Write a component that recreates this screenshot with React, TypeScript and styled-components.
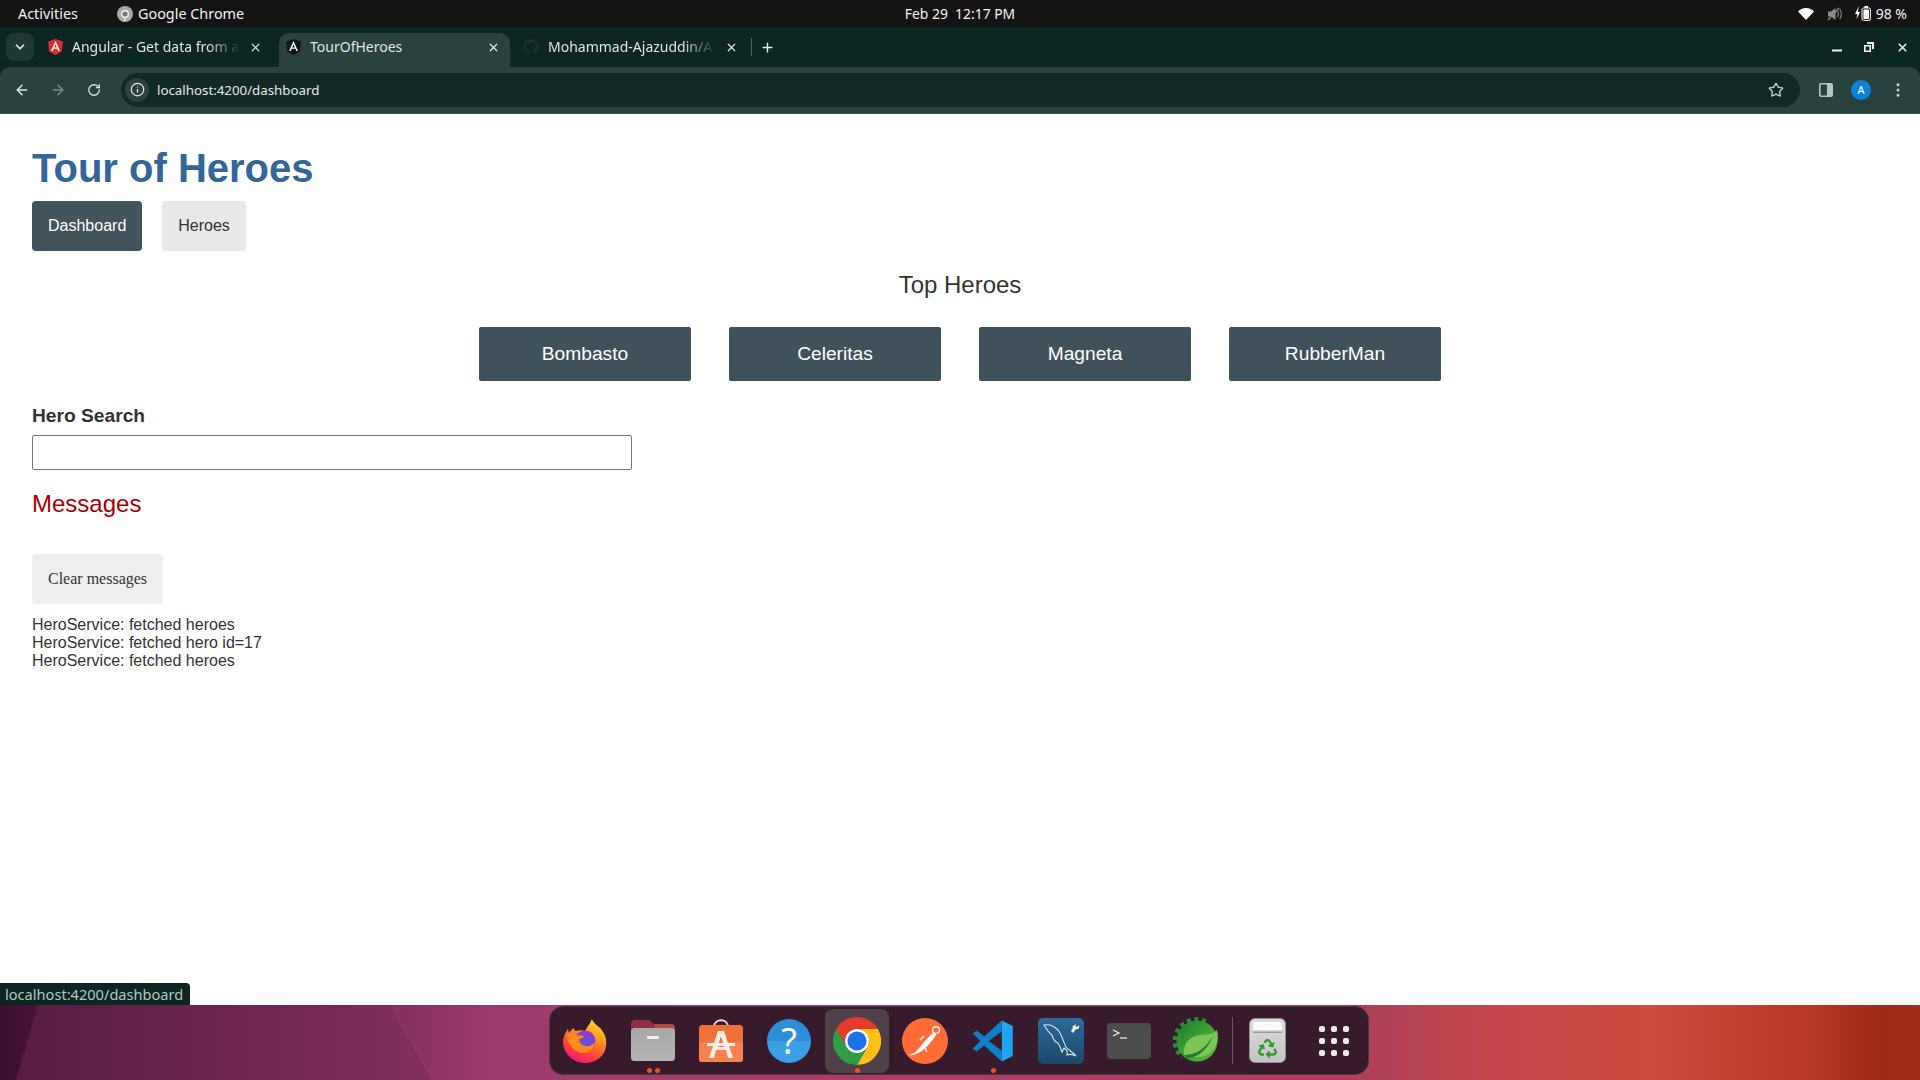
import React from 'react';
import styled, { createGlobalStyle } from 'styled-components';
import { ArrowLeft, ArrowRight, RotateCw, Info, Star, X, Plus, ChevronDown, EllipsisVertical } from 'lucide-react';
import { FaGithub, FaRecycle } from 'react-icons/fa';

const GlobalStyle = createGlobalStyle`
  html, body {
    margin: 0;
    padding: 0;
    overflow: hidden;
  }
  * {
    box-sizing: border-box;
  }
`;

const Screen = styled.div`
  width: 1920px;
  height: 1080px;
  display: flex;
  flex-direction: column;
  background: #fff;
  font-family: "Liberation Sans", Arial, sans-serif;
`;

/* ---- ubuntu top bar ---- */

const TopBar = styled.div`
  height: 27px;
  flex: none;
  display: grid;
  grid-template-columns: 1fr auto 1fr;
  align-items: center;
  padding: 0 18px;
  background: #141414;
  color: #f2f2f2;
  font-family: "Noto Sans", sans-serif;
  font-size: 14.4px;
`;

const TopLeft = styled.div`
  display: flex;
  align-items: center;
  gap: 39px;
`;

const AppName = styled.div`
  display: flex;
  align-items: center;
  gap: 5px;
`;

const Clock = styled.div`
  font-size: 13.9px;
  white-space: pre;
`;

const Tray = styled.div`
  justify-self: end;
  display: flex;
  align-items: center;
  margin-right: -5px;
`;

const BatteryText = styled.span`
  margin-left: 5px;
  font-size: 14px;
`;

/* ---- chrome tabs ---- */

const TabStrip = styled.div`
  height: 40px;
  flex: none;
  display: flex;
  padding: 6px 0 0 6px;
  background: #0c2623;
`;

const TabSearch = styled.div`
  width: 28px;
  height: 28px;
  margin-right: 7px;
  display: flex;
  align-items: center;
  justify-content: center;
  border-radius: 8px;
  background: #1e3835;
  color: #dfe7e5;
`;

const Tab = styled.div<{ $active?: boolean }>`
  width: 231px;
  height: 34px;
  margin-right: 7px;
  padding: 0 10px 6px 6px;
  display: flex;
  align-items: center;
  gap: 9px;
  border-radius: 10px 10px 0 0;
  background: ${({ $active }) => ($active ? '#2a423f' : 'transparent')};
  color: #dfe6e4;
  font-family: "Noto Sans", sans-serif;
  font-size: 14px;
`;

const Favicon = styled.span`
  width: 16px;
  height: 16px;
  flex: none;
  display: flex;
  align-items: center;
  justify-content: center;
`;

const TabTitle = styled.span<{ $fade?: boolean }>`
  flex: 1;
  min-width: 0;
  margin-bottom: 2px;
  white-space: nowrap;
  ${({ $fade }) => $fade && 'mask-image: linear-gradient(to right, #000 80%, transparent 100%);'}
`;

const TabClose = styled(X)`
  flex: none;
  color: #e6ecea;
`;

const TabDivider = styled.div`
  width: 1px;
  height: 18px;
  margin: 5px 8px 0 -4px;
  background: #4c625f;
`;

const NewTab = styled.div`
  height: 28px;
  display: flex;
  align-items: center;
  color: #e6ecea;
`;

const WindowButtons = styled.div`
  margin-left: auto;
  height: 28px;
  padding-right: 11px;
  display: flex;
  align-items: center;
  gap: 22px;
`;

/* ---- chrome toolbar ---- */

const ToolbarBand = styled.div`
  background: #0c2623;
  flex: none;
`;

const Toolbar = styled.div`
  height: 47px;
  display: flex;
  align-items: center;
  padding: 0 12px 1px 4px;
  background: #2a423f;
  border-radius: 10px 10px 0 0;
  border-bottom: 1px solid #3a504d;
  color: #dfe7e5;
`;

const NavButton = styled.div<{ $dim?: boolean }>`
  width: 36px;
  height: 28px;
  flex: none;
  display: flex;
  align-items: center;
  justify-content: center;
  color: ${({ $dim }) => ($dim ? '#7a8c89' : '#dfe7e5')};
`;

const Omnibox = styled.div`
  width: 1679px;
  height: 34px;
  margin-left: 9px;
  display: flex;
  align-items: center;
  padding: 0 16px 0 4px;
  border-radius: 17px;
  background: #122a27;
  font-family: "Noto Sans", sans-serif;
  font-size: 13.3px;
  color: #e3e9e7;
`;

const InfoChip = styled.div`
  width: 24px;
  height: 24px;
  margin-right: 8px;
  display: flex;
  align-items: center;
  justify-content: center;
  border-radius: 50%;
  background: #2a423f;
`;

const StarBox = styled.div`
  margin-left: auto;
  display: flex;
`;

const ToolbarRight = styled.div`
  display: flex;
  align-items: center;
  margin-left: 19px;
  gap: 18px;
`;

const Avatar = styled.div`
  width: 20px;
  height: 20px;
  display: flex;
  align-items: center;
  justify-content: center;
  border-radius: 50%;
  background: #0b84d8;
  color: #fff;
  font-family: "Noto Sans", sans-serif;
  font-size: 11px;
`;

/* ---- the angular page ---- */

const Page = styled.div`
  flex: 1;
  position: relative;
  padding: 31px 32px 0;
  color: #333;
`;

const Title = styled.h1`
  margin: 0;
  font-size: 40px;
  line-height: 46px;
  font-weight: 700;
  color: #369;
`;

const Nav = styled.nav`
  margin-top: 10px;
  display: flex;
  gap: 20px;
`;

const NavLink = styled.a<{ $active?: boolean }>`
  padding: 16px;
  line-height: 18px;
  font-size: 16px;
  border-radius: 4px;
  background: ${({ $active }) => ($active ? '#42545c' : '#e8e8e8')};
  color: ${({ $active }) => ($active ? '#fff' : '#333')};
`;

const TopHeading = styled.h2`
  margin: 20px 0 0;
  text-align: center;
  font-size: 24px;
  line-height: 28px;
  font-weight: 400;
`;

const HeroRow = styled.div`
  margin-top: 28px;
  display: flex;
  justify-content: center;
  gap: 38px;
`;

const HeroCard = styled.a`
  width: 212px;
  padding: 16px;
  text-align: center;
  font-size: 19.2px;
  line-height: 22px;
  border-radius: 2px;
  background: #3f525c;
  color: #fff;
`;

const SearchLabel = styled.label`
  display: block;
  margin-top: 24px;
  font-size: 19.2px;
  line-height: 22px;
  font-weight: 700;
`;

const SearchInput = styled.input`
  display: block;
  width: 600px;
  height: 35px;
  margin-top: 8px;
  padding: 8px;
  border: 1px solid #767676;
  border-radius: 2px;
  background: #fff;
`;

const MessagesHeading = styled.h2`
  margin: 20px 0 0;
  font-size: 24px;
  line-height: 28px;
  font-weight: 400;
  color: #a80000;
`;

const ClearButton = styled.button`
  display: block;
  height: 50px;
  margin-top: 36px;
  padding: 0 16px;
  border: none;
  border-radius: 4px;
  background: #eee;
  color: #333;
  font-family: "Liberation Serif", serif;
  font-size: 16px;
`;

const MessageList = styled.div`
  margin-top: 12px;
  font-size: 16px;
  line-height: 18px;
`;

const StatusBubble = styled.div`
  position: absolute;
  left: 0;
  bottom: 0;
  height: 22px;
  width: 190px;
  padding-left: 5px;
  display: flex;
  align-items: center;
  white-space: nowrap;
  border-radius: 0 4px 0 0;
  background: #0c2623;
  color: #b4c6c3;
  font-family: "Noto Sans", sans-serif;
  font-size: 14.6px;
`;

/* ---- desktop and dock ---- */

const Desktop = styled.div`
  height: 75px;
  flex: none;
  position: relative;
  display: flex;
  justify-content: center;
  padding: 1px 2px 0 0;
  background: linear-gradient(90deg, #3d0f2f 0, #5c1c44 100px, #84305f 390px, #9e3a6e 500px, #a83c68 800px,
    #b04058 1369px, #c4484a 1500px, #cb4c40 1650px, #b83a28 1800px, #9e2a18 1880px, #a02c1a 1920px);
  &::before {
    content: '';
    position: absolute;
    inset: 0 auto 0 0;
    width: 431px;
    clip-path: polygon(38px 0, 390px 0, 431px 100%, 16px 100%);
    background: linear-gradient(90deg, #541c42 0, #842f5e 100%);
  }
`;

const Dock = styled.div`
  position: relative;
  width: 820px;
  height: 69px;
  display: flex;
  align-items: center;
  padding: 0 3px 0 3px;
  gap: 4px;
  border-radius: 14px;
  background: #371a2b;
  border: 1px solid #4c3643;
`;

const DockSlot = styled.div<{ $active?: boolean }>`
  position: relative;
  width: 64px;
  height: 64px;
  flex: none;
  display: flex;
  align-items: center;
  justify-content: center;
  border-radius: 8px;
  background: ${({ $active }) => ($active ? '#524049' : 'transparent')};
`;

const RunDots = styled.div`
  position: absolute;
  left: 0;
  right: 0;
  bottom: 0;
  display: flex;
  justify-content: center;
  gap: 3px;
`;

const RunDot = styled.span`
  width: 5px;
  height: 5px;
  border-radius: 50%;
  background: #e95420;
`;

const DockSeparator = styled.div`
  width: 1px;
  height: 47px;
  flex: none;
  margin: 0 -2px 0 -1px;
  background: #6c5964;
`;

const HelpBall = styled.div`
  width: 44px;
  height: 44px;
  display: flex;
  align-items: center;
  justify-content: center;
  border-radius: 50%;
  background: linear-gradient(180deg, #2b8fd8 0, #2b8fd8 50%, #3a9fe4 50%, #3a9fe4 100%);
  color: #fff;
  font-family: "Noto Sans", sans-serif;
  font-size: 36px;
`;

const TrashCan = styled.div`
  position: relative;
  width: 37px;
  height: 45px;
  padding-top: 16px;
  display: flex;
  justify-content: center;
  align-items: center;
  border-radius: 6px;
  border: 1px solid #8f8f8f;
  background: linear-gradient(180deg, #dcdcdc 0, #c4c4c4 100%);
  color: #2f9a2f;
  &::before {
    content: '';
    position: absolute;
    top: 3px;
    left: 3px;
    right: 3px;
    height: 9px;
    border-radius: 2px 2px 0 0;
    border-top: 2px solid #fff;
    background: linear-gradient(180deg, #f4f4f4 0, #fff 60%, #8a8a8a 100%);
  }
`;

const AppGrid = styled.div`
  display: grid;
  grid-template-columns: repeat(3, 6px);
  gap: 6px;
  margin-right: 2px;
`;

const GridDot = styled.span`
  width: 6px;
  height: 6px;
  border-radius: 2px;
  background: #efefef;
`;

const AngularMark = ({ color }: { color: string }) => (
  <svg width="15" height="16" viewBox="0 0 15 16">
    <path d="M7.5 0 15 2.6 13.8 12.4 7.5 16 1.2 12.4 0 2.6Z" fill={color} />
    <path d="M7.5 2 3 12h1.7l.9-2.2h3.8l.9 2.2H12L7.5 2Zm-1.3 6.4 1.3-3.1 1.3 3.1H6.2Z" fill="#fff" />
  </svg>
);

const ChromeLogo = ({ size }: { size: number }) => (
  <svg width={size} height={size} viewBox="0 0 48 48">
    <path d="M3.2 12A24 24 0 0 1 44.8 12H24A12 12 0 0 0 13.6 30Z" fill="#e33b2e" />
    <path d="M44.8 12A24 24 0 0 1 24 48L34.4 30A12 12 0 0 0 24 12Z" fill="#fbc116" />
    <path d="M24 48A24 24 0 0 1 3.2 12L13.6 30A12 12 0 0 0 34.4 30Z" fill="#2f9e44" />
    <circle cx="24" cy="24" r="12" fill="#fff" />
    <circle cx="24" cy="24" r="9.5" fill="#1a73e8" />
  </svg>
);

const TinyChrome = () => (
  <svg width="16" height="16" viewBox="0 0 16 16">
    <circle cx="8" cy="8" r="8" fill="#a9a9a9" />
    <circle cx="8" cy="8" r="4" fill="#f2f2f2" />
    <circle cx="8" cy="8" r="2.6" fill="#777" />
    <path d="M9 11 7 15.6" stroke="#f2f2f2" strokeWidth="1.2" />
  </svg>
);

const Wifi = () => (
  <svg width="16" height="12" viewBox="0 0 16 12">
    <path d="M0 3.6C2 1.4 4.8 0 8 0s6 1.4 8 3.6L8 12Z" fill="#fff" />
  </svg>
);

const Muted = () => (
  <svg width="16" height="14" viewBox="0 0 16 14" style={{ marginLeft: 13 }}>
    <path d="M1 4.5h3L8.5 1v12L4 9.5H1Z" fill="#8a8a8a" />
    <path d="M10.5 4c1 1.8 1 4 0 6M12.8 2c1.8 3 1.8 7 0 10" stroke="#8a8a8a" strokeWidth="1.1" fill="none" />
    <path d="M1 13 12 1" stroke="#8a8a8a" strokeWidth="1.3" />
  </svg>
);

const Battery = () => (
  <svg width="16" height="15" viewBox="0 0 16 15" style={{ marginLeft: 12 }}>
    <path d="M4 0 0 8h2.2L1.6 13 5 6H2.8Z" fill="#fff" />
    <rect x="7" y="2" width="8.4" height="12.4" rx="1.6" fill="none" stroke="#fff" />
    <rect x="8.4" y="3.4" width="5.6" height="9.6" rx=".6" fill="#fff" />
    <rect x="9.4" y="0" width="3.6" height="2" fill="#fff" />
  </svg>
);

const SidePanel = () => (
  <svg width="14" height="14" viewBox="0 0 14 14">
    <rect width="14" height="14" rx="2" fill="#b5c6c3" />
    <rect x="1.6" y="1.6" width="6.4" height="10.8" rx=".6" fill="#2a423f" />
  </svg>
);

const Minimize = () => (
  <svg width="10" height="10" viewBox="0 0 10 10">
    <rect y="7.5" width="10" height="2" fill="#f0f0f0" />
  </svg>
);

const Restore = () => (
  <svg width="10" height="10" viewBox="0 0 10 10">
    <path d="M3 0h7v7H8V2H3Z" fill="#f0f0f0" />
    <path d="M0 3h7v7H0Zm1.6 1.6v3.8h3.8V4.6Z" fill="#f0f0f0" fillRule="evenodd" />
  </svg>
);

const Firefox = () => (
  <svg width="44" height="46" viewBox="0 0 44 46">
    <defs>
      <linearGradient id="ffBody" x1=".8" y1="0" x2=".3" y2="1">
        <stop offset="0" stopColor="#ffe226" />
        <stop offset=".35" stopColor="#ff9a1f" />
        <stop offset=".75" stopColor="#ff3d3d" />
        <stop offset="1" stopColor="#e9118c" />
      </linearGradient>
      <radialGradient id="ffGlobe" cx=".55" cy=".6" r=".6">
        <stop offset="0" stopColor="#5b53d6" />
        <stop offset="1" stopColor="#9a38c8" />
      </radialGradient>
    </defs>
    <path d="M29 1c1 4 5 6 9 10 4 5 6 10 5 17-1 10-10 17-21 17C10 45 1 36 0 25c0-6 2-10 5-14l1 4c1-2 2-3 5-5 0 2 1 3 2 3 3-1 6-1 9 0 2-4 5-7 7-12Z" fill="url(#ffBody)" />
    <circle cx="22" cy="23" r="10.5" fill="url(#ffGlobe)" />
    <path d="M4 17c3-2 7-2 9 0 3 1 5 0 8 1-1 2-3 3-5 3 0 3 2 6 6 7 4 1 8-1 10-4-1 7-6 11-12 11C11 35 5 27 4 17Z" fill="#ff8b1a" />
  </svg>
);

const Folder = () => (
  <svg width="44" height="42" viewBox="0 0 44 42">
    <defs>
      <linearGradient id="folderBody" x1="0" y1="0" x2="0" y2="1">
        <stop offset="0" stopColor="#a8a8a8" />
        <stop offset="1" stopColor="#b4b4b4" />
      </linearGradient>
    </defs>
    <path d="M0 4a4 4 0 0 1 4-4h14l5 4h17a4 4 0 0 1 4 4v12H0Z" fill="#8e3040" />
    <path d="M24 4h16a4 4 0 0 1 4 4v6H24Z" fill="#b44a3a" />
    <rect y="8" width="44" height="33" rx="3.5" fill="url(#folderBody)" />
    <rect x="16" y="16" width="12" height="3" rx="1" fill="#f2f2f2" />
  </svg>
);

const AppStore = () => (
  <svg width="44" height="43" viewBox="0 0 44 43">
    <path d="M15 8c0-9 14-9 14 0" fill="none" stroke="#f5dcc4" strokeWidth="1.8" />
    <rect y="6" width="44" height="37" rx="3.5" fill="#f0703a" />
    <rect y="23" width="44" height="20" rx="3" fill="#f58250" />
    <path d="M19 12h6l9 27h-5l-2-8H17l-2 8h-5Zm3 5-3.4 11h6.8Z" fill="#fbeee4" fillRule="evenodd" />
    <rect x="8" y="24" width="28" height="3" fill="#fbeee4" />
  </svg>
);

const Postman = () => (
  <svg width="46" height="46" viewBox="0 0 46 46">
    <circle cx="23" cy="23" r="23" fill="#ff6c37" />
    <path d="M7 37c5-1 8-4 11-8 4-5 8-10 14-15l2 3c-4 6-8 11-13 15-4 3-9 6-14 5Z" fill="#fff" />
    <circle cx="34" cy="12" r="3.4" fill="#ff6c37" stroke="#fff" strokeWidth="1.2" />
    <path d="M18 22l4-4M23 30l2 4" stroke="#fff" strokeWidth="1.6" />
  </svg>
);

const VsCode = () => (
  <svg width="42" height="42" viewBox="0 0 100 100">
    <path d="M71 1 97 14V86L71 99Z" fill="#22a5f0" />
    <path d="M71 1V27L40 50 71 73V99L29 61 11 75 2 68 20 50 2 32 11 25 29 39Z" fill="#0f7fc8" />
  </svg>
);

const Workbench = () => (
  <svg width="46" height="46" viewBox="0 0 46 46">
    <defs>
      <linearGradient id="wbTile" x1="0" y1="0" x2="0" y2="1">
        <stop offset="0" stopColor="#2d6a9a" />
        <stop offset="1" stopColor="#1c4868" />
      </linearGradient>
    </defs>
    <rect width="46" height="46" rx="5" fill="url(#wbTile)" />
    <path d="M6 7c5-1 10 1 14 5 4 5 5 11 8 17 2 3 6 4 10 9-3-2-6-2-9-1 1-3 0-5-3-7l-2 4c-1-3-2-6-4-9-3-1-5-4-6-8-3-2-5-5-8-10Z" fill="none" stroke="#d8e6f0" strokeWidth="1.1" />
    <path d="M34 9l4-3c-1 2 0 3 1 3l2-2c1 3-1 5-3 4l-3 4-2-2 2-3Z" fill="#f2f6f9" />
  </svg>
);

const Terminal = () => (
  <svg width="44" height="36" viewBox="0 0 44 36">
    <rect width="44" height="36" rx="4" fill="#4d4d4d" />
    <path d="M6 7l6 3-6 3" fill="none" stroke="#f2f2f2" strokeWidth="1.2" />
    <path d="M13 15h7" stroke="#f2f2f2" strokeWidth="1.2" />
  </svg>
);

const Spring = () => (
  <svg width="48" height="48" viewBox="0 0 48 48">
    <defs>
      <linearGradient id="springBall" x1="0" y1="0" x2="1" y2="1">
        <stop offset="0" stopColor="#1e7a34" />
        <stop offset=".55" stopColor="#3fa535" />
        <stop offset="1" stopColor="#5cb43c" />
      </linearGradient>
      <clipPath id="springTeeth">
        <path d="M0 0H36V6L6 44H0Z" />
      </clipPath>
    </defs>
    <circle cx="23.5" cy="24" r="21" fill="none" stroke="#2d8c34" strokeWidth="5.5" strokeDasharray="4 3.4" clipPath="url(#springTeeth)" />
    <circle cx="24" cy="24" r="20.5" fill="url(#springBall)" />
    <path d="M44 13c3 11-2 21-10 25-7 3-16 3-23 0-1-8 2-14 9-18 8-4 17 0 24-7Z" fill="#7cc455" />
    <path d="M11 38c12 0 21-6 29-19-5 12-14 22-26 22Z" fill="#237a2f" />
  </svg>
);

const dockDots = (count: number) => (
  <RunDots>
    {Array.from({ length: count }).map((_, i) => (
      <RunDot key={i} />
    ))}
  </RunDots>
);

const heroes = ['Bombasto', 'Celeritas', 'Magneta', 'RubberMan'];
const messages = ['HeroService: fetched heroes', 'HeroService: fetched hero id=17', 'HeroService: fetched heroes'];

const App: React.FC = () => {
  return (
    <Screen>
      <GlobalStyle />
      <TopBar>
        <TopLeft>
          <span>Activities</span>
          <AppName>
            <TinyChrome />
            Google Chrome
          </AppName>
        </TopLeft>
        <Clock>Feb 29  12:17 PM</Clock>
        <Tray>
          <Wifi />
          <Muted />
          <Battery />
          <BatteryText>98 %</BatteryText>
        </Tray>
      </TopBar>

      <TabStrip>
        <TabSearch>
          <ChevronDown size={14} strokeWidth={3} />
        </TabSearch>
        <Tab>
          <Favicon>
            <AngularMark color="#d9302f" />
          </Favicon>
          <TabTitle $fade>Angular - Get data from a</TabTitle>
          <TabClose size={13} strokeWidth={2.2} />
        </Tab>
        <Tab $active>
          <Favicon>
            <AngularMark color="#101414" />
          </Favicon>
          <TabTitle>TourOfHeroes</TabTitle>
          <TabClose size={13} strokeWidth={2.2} />
        </Tab>
        <Tab>
          <Favicon>
            <FaGithub size={16} color="#1d2f2d" />
          </Favicon>
          <TabTitle $fade>Mohammad-Ajazuddin/A</TabTitle>
          <TabClose size={13} strokeWidth={2.2} />
        </Tab>
        <TabDivider />
        <NewTab>
          <Plus size={15} strokeWidth={2.2} />
        </NewTab>
        <WindowButtons>
          <Minimize />
          <Restore />
          <X size={13} strokeWidth={3} color="#f0f0f0" />
        </WindowButtons>
      </TabStrip>

      <ToolbarBand>
        <Toolbar>
          <NavButton>
            <ArrowLeft size={16} strokeWidth={2.2} />
          </NavButton>
          <NavButton $dim>
            <ArrowRight size={16} strokeWidth={2.2} />
          </NavButton>
          <NavButton>
            <RotateCw size={14} strokeWidth={2.2} />
          </NavButton>
          <Omnibox>
            <InfoChip>
              <Info size={15} />
            </InfoChip>
            localhost:4200/dashboard
            <StarBox>
              <Star size={16} strokeWidth={2} color="#c4d2cf" />
            </StarBox>
          </Omnibox>
          <ToolbarRight>
            <SidePanel />
            <Avatar>A</Avatar>
            <EllipsisVertical size={18} color="#c4d2cf" />
          </ToolbarRight>
        </Toolbar>
      </ToolbarBand>

      <Page>
        <Title>Tour of Heroes</Title>
        <Nav>
          <NavLink $active>Dashboard</NavLink>
          <NavLink>Heroes</NavLink>
        </Nav>
        <TopHeading>Top Heroes</TopHeading>
        <HeroRow>
          {heroes.map((hero) => (
            <HeroCard key={hero}>{hero}</HeroCard>
          ))}
        </HeroRow>
        <SearchLabel>Hero Search</SearchLabel>
        <SearchInput />
        <MessagesHeading>Messages</MessagesHeading>
        <ClearButton>Clear messages</ClearButton>
        <MessageList>
          {messages.map((message, i) => (
            <div key={i}>{message}</div>
          ))}
        </MessageList>
        <StatusBubble>localhost:4200/dashboard</StatusBubble>
      </Page>

      <Desktop>
        <Dock>
          <DockSlot>
            <Firefox />
          </DockSlot>
          <DockSlot>
            <Folder />
            {dockDots(2)}
          </DockSlot>
          <DockSlot>
            <AppStore />
          </DockSlot>
          <DockSlot>
            <HelpBall>?</HelpBall>
          </DockSlot>
          <DockSlot $active>
            <ChromeLogo size={48} />
            {dockDots(1)}
          </DockSlot>
          <DockSlot>
            <Postman />
          </DockSlot>
          <DockSlot>
            <VsCode />
            {dockDots(1)}
          </DockSlot>
          <DockSlot>
            <Workbench />
          </DockSlot>
          <DockSlot>
            <Terminal />
          </DockSlot>
          <DockSlot>
            <Spring />
          </DockSlot>
          <DockSeparator />
          <DockSlot>
            <TrashCan>
              <FaRecycle size={19} />
            </TrashCan>
          </DockSlot>
          <DockSlot>
            <AppGrid>
              {Array.from({ length: 9 }).map((_, i) => (
                <GridDot key={i} />
              ))}
            </AppGrid>
          </DockSlot>
        </Dock>
      </Desktop>
    </Screen>
  );
};

export default App;
